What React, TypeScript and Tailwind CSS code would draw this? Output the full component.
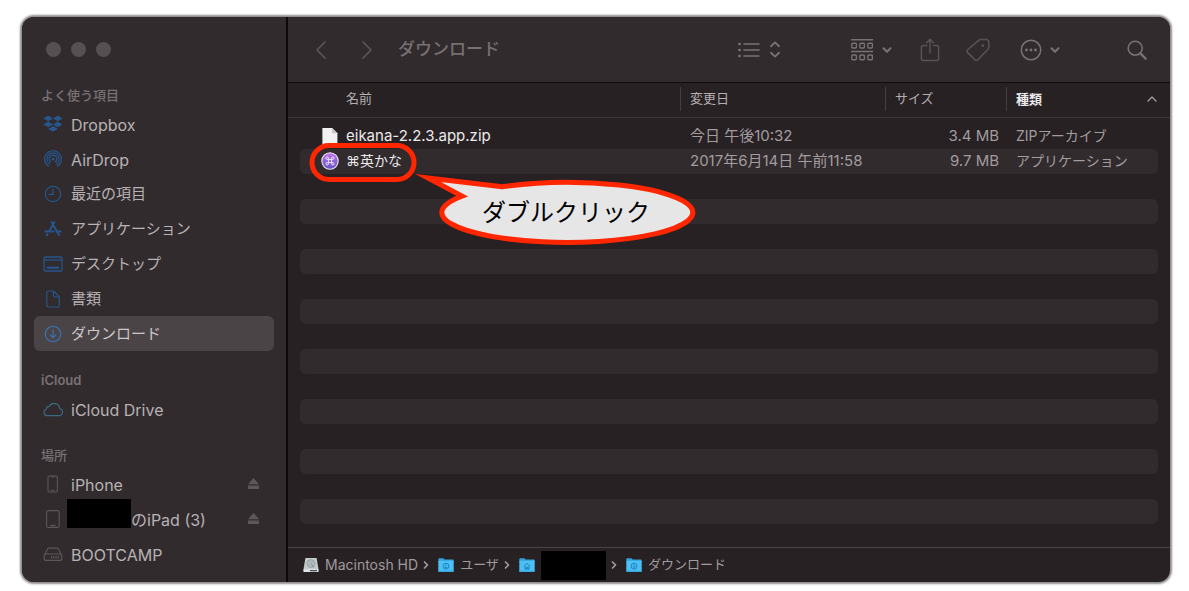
import React from 'react';
import clsx from 'clsx';
import { ChevronDown, ChevronRight, ChevronUp } from 'lucide-react';

type IconProps = { className?: string };

const DropboxIcon = ({ className }: IconProps) => (
    <svg viewBox="0 0 18 16" className={className} fill="currentColor">
        <path d="M4.7 0.4 9 3 4.7 5.6 0.4 3zM13.3 0.4 17.6 3 13.3 5.6 9 3zM4.7 5.8 9 8.4 4.7 11 0.4 8.4zM13.3 5.8 17.6 8.4 13.3 11 9 8.4zM9 9.8 13.3 12.4 9 15 4.7 12.4z" />
    </svg>
);

const AirDropIcon = ({ className }: IconProps) => (
    <svg viewBox="0 0 18 18" className={className} fill="none" stroke="currentColor" strokeWidth="1.2" strokeLinecap="round">
        <path d="M4.6 16.3a8.4 8.4 0 1 1 8.8 0" />
        <path d="M5.6 14a6.1 6.1 0 1 1 6.8 0" />
        <path d="M6.6 11.8a3.8 3.8 0 1 1 4.8 0" />
        <circle cx="9" cy="9" r="1.5" fill="currentColor" stroke="none" />
    </svg>
);

const ClockIcon = ({ className }: IconProps) => (
    <svg viewBox="0 0 18 18" className={className} fill="none" stroke="currentColor" strokeWidth="1.2" strokeLinecap="round">
        <circle cx="9" cy="9" r="7.7" />
        <path d="M9 4v5.3H5" />
    </svg>
);

const AppsIcon = ({ className }: IconProps) => (
    <svg viewBox="0 0 18 18" className={className} fill="none" stroke="currentColor" strokeWidth="2" strokeLinecap="round">
        <path d="M10.3 2.2 5 11.4M3.4 14.2l-.6 1.1M7.7 2.2l7.2 12.9M1.4 11.6h8.2M13.2 11.6h3.4" />
    </svg>
);

const DesktopIcon = ({ className }: IconProps) => (
    <svg viewBox="0 0 20 18" className={className} fill="none" stroke="currentColor" strokeWidth="1.3">
        <rect x="1" y="2" width="18" height="14" rx="1.6" />
        <path d="M1 5h18" />
        <path d="M4 12.7h12" strokeWidth="2.2" />
    </svg>
);

const DocumentIcon = ({ className }: IconProps) => (
    <svg viewBox="0 0 18 18" className={className} fill="none" stroke="currentColor" strokeWidth="1.2" strokeLinejoin="round">
        <path d="M9.6 1H4.2A1.4 1.4 0 0 0 2.8 2.4v13.2A1.4 1.4 0 0 0 4.2 17h9.6a1.4 1.4 0 0 0 1.4-1.4V6.8z" />
        <path d="M9.4 1.2v4.4a1.4 1.4 0 0 0 1.4 1.4h4.2" />
    </svg>
);

const DownloadIcon = ({ className }: IconProps) => (
    <svg viewBox="0 0 18 18" className={className} fill="none" stroke="currentColor" strokeWidth="1.3" strokeLinecap="round" strokeLinejoin="round">
        <circle cx="9" cy="9" r="7.7" />
        <path d="M9 5v7.6M6.2 10 9 12.8 11.8 10" />
    </svg>
);

const CloudIcon = ({ className }: IconProps) => (
    <svg viewBox="1 1 20 16" className={className} fill="none" stroke="currentColor" strokeWidth="1.2">
        <path d="M5.6 15.6h11.2a3.6 3.6 0 0 0 .9-7.1A5.5 5.5 0 0 0 7.4 6.3 3.1 3.1 0 0 0 4.2 9.2a3.3 3.3 0 0 0 1.4 6.4z" />
    </svg>
);

const PhoneIcon = ({ className }: IconProps) => (
    <svg viewBox="0 0 18 18" className={className} fill="none" stroke="currentColor" strokeWidth="1.1">
        <rect x="4" y="1" width="9.4" height="16" rx="1.6" />
        <path d="M6.8 1.8h3.8M6.6 15.2h4.2" />
    </svg>
);

const TabletIcon = ({ className }: IconProps) => (
    <svg viewBox="0 0 18 18" className={className} fill="none" stroke="currentColor" strokeWidth="1.1">
        <rect x="2.6" y=".6" width="12.6" height="16.8" rx="1.6" />
        <path d="M6.4 15.4h5" />
    </svg>
);

const DriveIcon = ({ className }: IconProps) => (
    <svg viewBox="0 0 20 18" className={className} fill="none" stroke="currentColor" strokeWidth="1.1">
        <path d="M1.6 10 4.6 4a1.6 1.6 0 0 1 1.4-.9h8a1.6 1.6 0 0 1 1.4.9l3 6" />
        <rect x="1.2" y="9" width="17.6" height="6.4" rx="2" />
        <path d="M8 12.2h8.4" strokeWidth="2.4" strokeDasharray="1 .8" />
    </svg>
);

const EjectIcon = () => (
    <svg viewBox="0 0 11 11" className="h-[11px] w-[11px]" fill="currentColor">
        <path d="M5.5 0 11 6.2H0zM0 7.4h11V11H0z" />
    </svg>
);

const ListIcon = () => (
    <svg viewBox="0 0 22 16" className="h-4 w-[22px]" fill="none" stroke="currentColor" strokeWidth="1.6" strokeLinecap="round">
        <path d="M6 2h15M6 8h15M6 14h15" />
        <path d="M1.4 2h.2M1.4 8h.2M1.4 14h.2" strokeWidth="2.6" />
    </svg>
);

const SortIcon = () => (
    <svg viewBox="0 0 10 17" className="h-[17px] w-2.5" fill="none" stroke="currentColor" strokeWidth="1.9" strokeLinecap="round" strokeLinejoin="round">
        <path d="M1 5.2 5 1.4l4 3.8M1 11.8l4 3.8 4-3.8" />
    </svg>
);

const GroupIcon = () => (
    <svg viewBox="0 0 22 22" className="h-[22px] w-[22px]" fill="none" stroke="currentColor" strokeWidth="1.4">
        <path d="M0 .8h22M0 12.4h22" strokeWidth="1.5" />
        {[1, 9, 17].map((x) => (
            <React.Fragment key={x}>
                <rect x={x - 0.2} y="4.2" width="4.6" height="4.8" rx="1" />
                <rect x={x - 0.2} y="16" width="4.6" height="4.8" rx="1" />
            </React.Fragment>
        ))}
    </svg>
);

const ShareIcon = () => (
    <svg viewBox="0 0 20 24" className="h-6 w-5" fill="none" stroke="currentColor" strokeWidth="1.5" strokeLinecap="round" strokeLinejoin="round">
        <path d="M6.6 7.4H3.4A2 2 0 0 0 1.4 9.4v11.2a2 2 0 0 0 2 2h13.2a2 2 0 0 0 2-2V9.4a2 2 0 0 0-2-2h-3.2" />
        <path d="M10 15V1.4M6.6 4.8 10 1.4l3.4 3.4" />
    </svg>
);

const TagIcon = () => (
    <svg viewBox="0 0 24 24" className="h-6 w-6" fill="none" stroke="currentColor" strokeWidth="1.5" strokeLinejoin="round">
        <path d="M14.6 1.6h5.6a2.6 2.6 0 0 1 2.6 2.6v5.2a2.6 2.6 0 0 1-.8 1.8L11.6 22a1.6 1.6 0 0 1-2.4 0L1.4 14.4a1.6 1.6 0 0 1 0-2.4L12.6 2.4a3 3 0 0 1 2-.8z" />
        <circle cx="16.8" cy="7.6" r="1.4" fill="currentColor" stroke="none" />
    </svg>
);

const MoreIcon = () => (
    <svg viewBox="0 0 22 22" className="h-[22px] w-[22px]" fill="currentColor">
        <circle cx="11" cy="11" r="9.7" fill="none" stroke="currentColor" strokeWidth="1.5" />
        <circle cx="6.5" cy="11" r="1.4" />
        <circle cx="11" cy="11" r="1.4" />
        <circle cx="15.5" cy="11" r="1.4" />
    </svg>
);

const SearchIcon = () => (
    <svg viewBox="0 0 20 20" className="h-5 w-5" fill="none" stroke="currentColor" strokeLinecap="round">
        <circle cx="8.2" cy="8.2" r="7" strokeWidth="1.6" />
        <path d="m13.4 13.4 5.2 5.2" strokeWidth="2.2" />
    </svg>
);

const ZipFileIcon = () => (
    <svg viewBox="0 0 20 20" className="h-5 w-5">
        <path d="M2.4 2h9.8l5.2 5.2V19H2.4z" fill="#f2f2f2" />
        <path d="M12.2 2v5.2h5.2z" fill="#c4c4c4" />
    </svg>
);

const EikanaIcon = () => (
    <svg viewBox="0 0 20 20" className="h-5 w-5">
        <defs>
            <linearGradient id="eikana" x1="0" y1="0" x2="0" y2="1">
                <stop offset="0" stopColor="#c274e8" />
                <stop offset="1" stopColor="#6252c4" />
            </linearGradient>
        </defs>
        <circle cx="10" cy="10" r="8.2" fill="url(#eikana)" stroke="#ece6f0" strokeWidth="1.1" />
        <path
            d="M8.4 8.4h3.2v3.2H8.4zM8.4 8.4H7.2a1.2 1.2 0 1 1 1.2-1.2zM11.6 8.4V7.2a1.2 1.2 0 1 1 1.2 1.2zM11.6 11.6h1.2a1.2 1.2 0 1 1-1.2 1.2zM8.4 11.6v1.2a1.2 1.2 0 1 1-1.2-1.2z"
            fill="none"
            stroke="#f4eefa"
            strokeWidth=".9"
        />
    </svg>
);

const DiskIcon = () => (
    <svg viewBox="0 0 16 16" className="h-4 w-4">
        <path d="M2.4 1h11.2L15.6 13H.4z" fill="#c3cbcd" />
        <rect x=".4" y="12.2" width="15.2" height="2.8" rx=".6" fill="#dfe3e4" />
        <circle cx="8" cy="6.6" r="4" fill="#b0babd" stroke="#8e999c" strokeWidth=".7" />
        <path d="m8 6.6 3 4" stroke="#7d888b" strokeWidth=".8" />
        <path d="M7 13.7h7" stroke="#3c4446" strokeWidth="1.2" />
    </svg>
);

const FolderIcon = ({ kind }: { kind: 'users' | 'home' | 'downloads' }) => (
    <svg viewBox="0 0 16 16" className="h-4 w-4">
        <path d="M.3 2.2A1 1 0 0 1 1.3 1.2h4l1.4 1.4h8a1 1 0 0 1 1 1V5H.3z" fill="#2fa3e0" />
        <rect x=".3" y="3.8" width="15.4" height="11" rx=".9" fill="#4cc0f5" />
        <path d="M.3 13.4h15.4v.5a.9.9 0 0 1-.9.9H1.2a.9.9 0 0 1-.9-.9z" fill="#38aee8" />
        <g fill="none" stroke="#1c83c0" strokeWidth="1">
            {kind === 'home' ? <path d="M5 9.2 8 6.4l3 2.8M6 9v3.2h1.4v-2h1.2v2H10V9" /> : <circle cx="8" cy="9.2" r="2.9" />}
            {kind === 'users' && <path d="M8 7.6v1.4M6.4 11c.4-1.2 2.8-1.2 3.2 0" />}
            {kind === 'downloads' && <path d="M8 7.6v2.8M7 9.6l1 1 1-1" />}
        </g>
    </svg>
);

type SidebarItem = {
    label: string;
    icon: React.ComponentType<IconProps>;
    color: string;
    active?: boolean;
    eject?: boolean;
    hiddenOwner?: boolean;
};

const BLUE = 'text-[#26568c]';
const GREY = 'text-[#5e575a]';

// Inter runs small beside the Japanese face, so labels with Latin letters go one size up
const hasLatin = (text: string) => /[A-Za-z]/.test(text);

const sections: { title: string; items: SidebarItem[] }[] = [
    {
        title: 'よく使う項目',
        items: [
            { label: 'Dropbox', icon: DropboxIcon, color: BLUE },
            { label: 'AirDrop', icon: AirDropIcon, color: BLUE },
            { label: '最近の項目', icon: ClockIcon, color: BLUE },
            { label: 'アプリケーション', icon: AppsIcon, color: BLUE },
            { label: 'デスクトップ', icon: DesktopIcon, color: BLUE },
            { label: '書類', icon: DocumentIcon, color: BLUE },
            { label: 'ダウンロード', icon: DownloadIcon, color: 'text-[#3a70aa]', active: true },
        ],
    },
    {
        title: 'iCloud',
        items: [{ label: 'iCloud Drive', icon: CloudIcon, color: 'text-[#3a6a80]' }],
    },
    {
        title: '場所',
        items: [
            { label: 'iPhone', icon: PhoneIcon, color: GREY, eject: true },
            { label: 'のiPad (3)', icon: TabletIcon, color: GREY, eject: true, hiddenOwner: true },
            { label: 'BOOTCAMP', icon: DriveIcon, color: GREY },
        ],
    },
];

const files = [
    { name: 'eikana-2.2.3.app.zip', icon: ZipFileIcon, date: '今日 午後10:32', size: '3.4 MB', kind: 'ZIPアーカイブ' },
    { name: '⌘英かな', icon: EikanaIcon, date: '2017年6月14日 午前11:58', size: '9.7 MB', kind: 'アプリケーション', callout: 'ダブルクリック' },
];

const EMPTY_ROWS = 14;

const Sidebar = () => (
    <aside className="w-[266px] shrink-0 border-r-2 border-[#0c090a] bg-[#312b2e]">
        <div className="flex h-[49px] gap-2.5 pt-[25px] pl-6">
            {['閉じる', 'しまう', '拡大'].map((label) => (
                <button key={label} aria-label={label} className="h-[15px] w-[15px] rounded-full bg-[#575053]" />
            ))}
        </div>
        <nav className="px-3">
            {sections.map((section) => (
                <section key={section.title}>
                    <h2 className={clsx('flex h-10 items-end pl-[7px] text-[13px] leading-[22px] text-[#787174]', hasLatin(section.title) ? 'font-semibold' : 'font-medium')}>
                        {section.title}
                    </h2>
                    <ul>
                        {section.items.map(({ label, icon: Icon, color, active, eject, hiddenOwner }) => (
                            <li key={label} className={clsx('flex h-[35px] items-center rounded-md pr-[15px] pl-[7px]', active && 'bg-[#4a4447]')}>
                                <a
                                    href="#"
                                    className={clsx(
                                        'flex h-full flex-1 items-center gap-1.5',
                                        hasLatin(label) ? 'text-base' : 'text-[15px]',
                                        active ? 'text-[#cbc7c9]' : 'text-[#b7b2b4]'
                                    )}
                                >
                                    <span className={clsx('flex w-6 justify-center', color)}>
                                        <Icon className="h-[18px] w-5" />
                                    </span>
                                    <span className="flex h-full items-center pt-0.5">
                                        {hiddenOwner && <span className="-mt-3 -ml-1 h-[29px] w-16 bg-black" />}
                                        {label}
                                    </span>
                                </a>
                                {eject && (
                                    <button aria-label="取り出す" className={GREY}>
                                        <EjectIcon />
                                    </button>
                                )}
                            </li>
                        ))}
                    </ul>
                </section>
            ))}
        </nav>
    </aside>
);

const Toolbar = () => (
    <header className="flex h-[66px] items-center border-b border-[#0f0c0d] bg-[#312b2e] pr-[23px] pl-7 text-[#797275]">
        <div className="flex gap-9 text-[#5c5558]">
            <button aria-label="戻る">
                <svg viewBox="0 0 10 18" className="h-[18px] w-2.5" fill="none" stroke="currentColor" strokeWidth="1.7" strokeLinecap="round" strokeLinejoin="round">
                    <path d="M9 1 1 9l8 8" />
                </svg>
            </button>
            <button aria-label="進む">
                <svg viewBox="0 0 10 18" className="h-[18px] w-2.5" fill="none" stroke="currentColor" strokeWidth="1.7" strokeLinecap="round" strokeLinejoin="round">
                    <path d="m1 1 8 8-8 8" />
                </svg>
            </button>
        </div>
        <h1 className="ml-[26px] text-[17px] font-medium text-[#777073]">ダウンロード</h1>
        <button aria-label="表示" className="mr-[71px] ml-auto flex w-[42px] items-center justify-between">
            <ListIcon />
            <SortIcon />
        </button>
        <div className="flex items-center gap-[26px]">
            <button aria-label="グループ" className="flex w-[43px] items-center justify-between">
                <GroupIcon />
                <ChevronDown className="h-3.5 w-3.5" strokeWidth={3.4} />
            </button>
            <button aria-label="共有" className="text-[#5a5356]">
                <ShareIcon />
            </button>
            <button aria-label="タグ" className="text-[#5a5356]">
                <TagIcon />
            </button>
            <button aria-label="その他" className="flex w-[46px] items-center justify-end gap-1.5">
                <MoreIcon />
                <ChevronDown className="h-3.5 w-3.5" strokeWidth={3.4} />
            </button>
        </div>
        <button aria-label="検索" className="ml-[65px]">
            <SearchIcon />
        </button>
    </header>
);

// Red ring around the file name and the balloon that points to it
const Callout = ({ text }: { text: string }) => (
    <div className="pointer-events-none absolute -top-[9px] left-0 z-10 h-[110px] w-[400px]">
        <svg viewBox="0 0 400 110" className="h-full w-full" stroke="#ff2600" strokeWidth="5" strokeMiterlimit="12">
            <rect x="12" y="5.5" width="102" height="34" rx="17" fill="none" />
            <path d="M128 38 202 46.8A125.5 30 0 1 1 162 56.1Z" fill="#e6e6e6" />
        </svg>
        <span className="absolute top-10 left-[138px] flex h-16 w-64 items-center justify-center pt-0.5 text-[24px] leading-none text-black">{text}</span>
    </div>
);

const GRID = 'grid grid-cols-[1fr_205px_121px_152px] items-center';

const FileTable = () => (
    <table className="block text-left text-sm">
        <thead className="block text-[13px] text-[#b3aeb0]">
            <tr className={clsx(GRID, 'h-[35px] border-b border-[#3d373a] px-3 pb-0.5')}>
                <th className="h-6 pl-[46px] leading-[22px] font-normal">名前</th>
                <th className="h-6 border-l border-[#453f42] pl-[9px] leading-[22px] font-normal">変更日</th>
                <th className="h-6 border-l border-[#453f42] pl-[9px] leading-[22px] font-normal">サイズ</th>
                <th aria-sort="ascending" className="flex h-6 items-center justify-between border-l border-[#453f42] pl-[9px] leading-[22px] font-bold text-[#ebe9ea]">
                    種類
                    <ChevronUp className="-mr-0.5 h-4 w-4 text-[#a5a0a2]" strokeWidth={1.8} />
                </th>
            </tr>
        </thead>
        <tbody className="block px-3 pt-1.5 text-[#a29c9f]">
            {files.map(({ name, icon: Icon, date, size, kind, callout }) => (
                <tr key={name} className={clsx(GRID, 'h-[25px] rounded-md pb-0.5 even:bg-[#312b2e]')}>
                    <td className={clsx('relative flex h-full items-center gap-1.5 pl-5 text-[#ebe9ea]', hasLatin(name) && 'text-[15px]')}>
                        <Icon />
                        {name}
                        {callout && <Callout text={callout} />}
                    </td>
                    <td className="pl-2.5 text-[15px]">{date}</td>
                    <td className="pr-[7px] text-right text-[15px]">{size}</td>
                    <td className="pl-2.5">{kind}</td>
                </tr>
            ))}
            {Array.from({ length: EMPTY_ROWS }, (_, i) => (
                <tr key={i} aria-hidden="true" className={clsx(GRID, 'h-[25px] rounded-md even:bg-[#312b2e]')}>
                    <td colSpan={4} />
                </tr>
            ))}
        </tbody>
    </table>
);

const PathArrow = () => <ChevronRight className="-ml-1 h-3 w-3" strokeWidth={3.4} />;

const PathBar = () => (
    <footer className="mt-auto flex h-[35px] items-center gap-1.5 border-t border-[#4a4447] pl-[15px] text-[13px] text-[#a09a9d]">
        <DiskIcon />
        <span className="text-sm">Macintosh HD</span>
        <PathArrow />
        <FolderIcon kind="users" />
        <span>ユーザ</span>
        <PathArrow />
        <FolderIcon kind="home" />
        <span className="h-[29px] w-[65px] bg-black" />
        <PathArrow />
        <FolderIcon kind="downloads" />
        <span>ダウンロード</span>
    </footer>
);

const App: React.FC = () => {
    return (
        <div className="flex min-h-screen bg-white pt-[17px] pr-[19px] pb-[9px] pl-[22px] font-['Inter','Noto_Sans_CJK_JP',sans-serif]">
            <div className="flex flex-1 overflow-hidden rounded-xl bg-[#272124] shadow-[0_0_2px_2px_rgba(70,62,66,0.6)]">
                <Sidebar />
                <main className="flex min-w-0 flex-1 flex-col">
                    <Toolbar />
                    <FileTable />
                    <PathBar />
                </main>
            </div>
        </div>
    );
};

export default App;
